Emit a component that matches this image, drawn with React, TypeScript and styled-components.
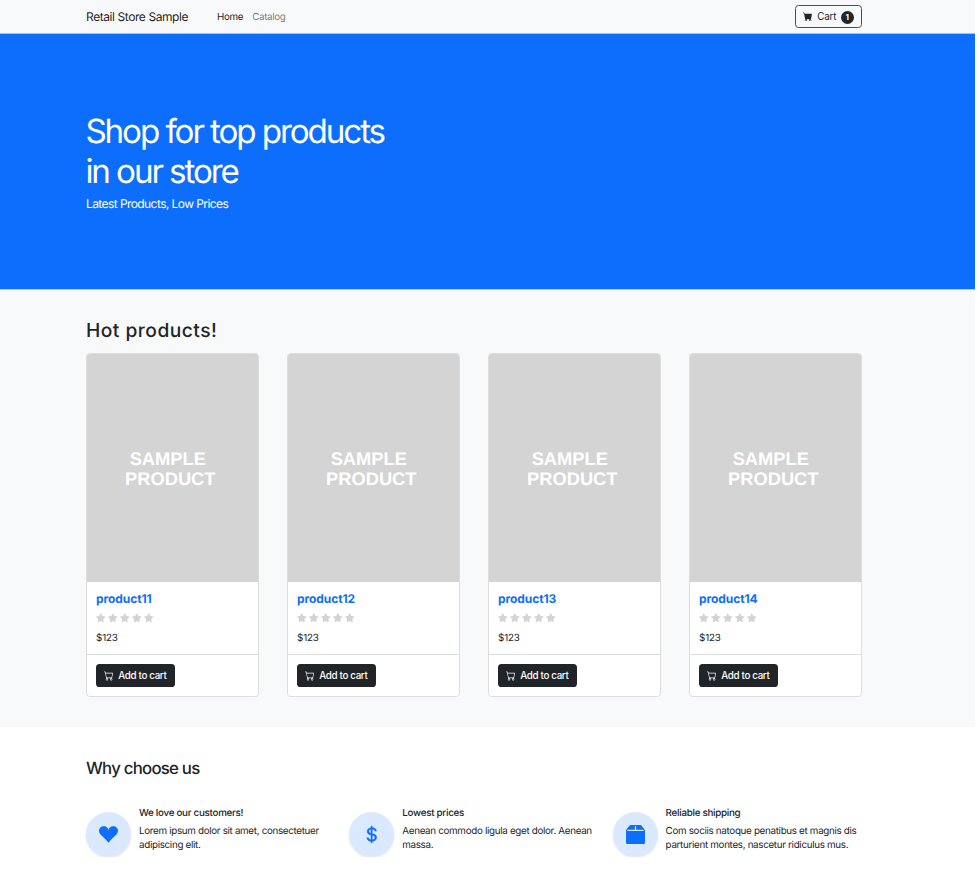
import React from "react";
import styled, { createGlobalStyle } from "styled-components";
import {
  BsBox2Fill,
  BsCart,
  BsCartFill,
  BsCurrencyDollar,
  BsStarFill,
  BsSuitHeartFill,
} from "react-icons/bs";

const Global = createGlobalStyle`
  *, *::before, *::after { box-sizing: border-box; }
  body {
    margin: 0;
    background: #fff;
    color: #212529;
    font-family: Inter, "Liberation Sans", sans-serif;
    font-size: 9.8px;
    line-height: 14.4px;
    text-rendering: geometricPrecision;
    overflow: hidden;
  }
  h1, h2, h3, h4, p { margin: 0; font-weight: 400; }
  svg { display: block; flex: none; }
`;

const Page = styled.div`
  width: 975px;
`;

const Container = styled.div`
  width: 775.6px;
  margin-left: 86px;
`;

const Header = styled.header`
  height: 34px;
  border-bottom: 1px solid #a0c3f2;
  background: #f8f9fa;
`;

const NavBar = styled(Container)`
  height: 33px;
  display: flex;
  align-items: center;
`;

const Brand = styled.a`
  width: 131px;
  padding-top: 1px;
  font-size: 12px;
  letter-spacing: -0.42px;
  color: rgba(0, 0, 0, 0.9);
`;

const NavLink = styled.a<{ $active?: boolean }>`
  margin-right: 9.2px;
  padding-top: 3px;
  letter-spacing: -0.36px;
  color: ${(p) => (p.$active ? "rgba(0,0,0,0.9)" : "rgba(0,0,0,0.55)")};
`;

const CartButton = styled.button`
  margin-left: auto;
  width: 66.4px;
  height: 23px;
  padding: 0 6.5px;
  display: flex;
  align-items: center;
  border: 1px solid #4a4d51;
  border-radius: 3.6px;
  background: transparent;
  color: #212529;
  font: inherit;
  letter-spacing: -0.15px;
`;

const CartLabel = styled.span`
  margin: 0 auto 0 5px;
  padding-top: 1px;
`;

const Badge = styled.span`
  width: 13.5px;
  height: 13px;
  margin-top: 1px;
  border-radius: 7px;
  background: #212529;
  color: #fff;
  font-size: 8px;
  font-weight: 700;
  line-height: 13px;
  letter-spacing: 0;
  text-align: center;
`;

const Hero = styled.section`
  height: 256px;
  padding-top: 77.6px;
  border-bottom: 1px solid #a9d0ff;
  background: #0d6efd;
  color: #fff;
`;

const HeroTitle = styled.h1`
  margin-left: -0.6px;
  font-size: 33.2px;
  font-weight: 370;
  line-height: 40.2px;
  letter-spacing: -2.1px;
`;

const HeroText = styled.p`
  margin-top: 3px;
  font-size: 12px;
  line-height: 18px;
  letter-spacing: -0.58px;
`;

const Products = styled.section`
  height: 437px;
  padding-top: 28px;
  background: #f8f9fa;
`;

const ProductsTitle = styled.h2`
  height: 35px;
  font-size: 19.2px;
  font-weight: 500;
  line-height: 24px;
  letter-spacing: 0.48px;
`;

const ProductGrid = styled.div`
  display: grid;
  grid-template-columns: repeat(4, 172.6px);
  justify-content: space-between;
`;

const Card = styled.article`
  height: 344px;
  display: flex;
  flex-direction: column;
  border: 1px solid #dcdddd;
  border-radius: 3.6px;
  background: #fff;
  overflow: hidden;
`;

const Picture = styled.div`
  height: 228px;
  padding: 95px 4px 0 0;
  background: #d4d4d4;
  color: #fff;
  font: 700 18.3px/20px "Liberation Sans", sans-serif;
  text-align: center;
`;

const CardBody = styled.div`
  height: 72px;
  padding: 8px 9px 0;
`;

const ProductName = styled.h3`
  color: #0d6efd;
  font-size: 12px;
  font-weight: 700;
  line-height: 17px;
  letter-spacing: -0.08px;
`;

const Stars = styled.div`
  height: 20px;
  margin-top: 0.8px;
  display: flex;
  align-items: center;
  gap: 2.55px;
  color: #d3d3d3;
`;

const Price = styled.p`
  margin-top: 4px;
  letter-spacing: -0.15px;
`;

const CardFooter = styled.div`
  flex: 1;
  padding: 9px 9px 0;
  border-top: 1px solid #dcdddd;
`;

const AddButton = styled.button`
  width: 79px;
  height: 23px;
  padding: 1px 0 0 8px;
  display: flex;
  align-items: center;
  gap: 4.7px;
  border: 0;
  border-radius: 3.6px;
  background: #212529;
  color: #fff;
  font: inherit;
  font-weight: 450;
  letter-spacing: -0.34px;
  white-space: nowrap;
`;

const Why = styled.section`
  padding-top: 32px;
`;

const WhyTitle = styled.h2`
  font-size: 16.8px;
  font-weight: 500;
  line-height: 21px;
  letter-spacing: -0.76px;
`;

const Benefits = styled.div`
  margin-top: 26px;
  display: grid;
  grid-template-columns: repeat(3, 263.3px);
`;

const Benefit = styled.article`
  display: flex;
  gap: 8px;
`;

const BenefitIcon = styled.div`
  flex: none;
  width: 45px;
  height: 45px;
  margin-top: 6px;
  display: flex;
  align-items: center;
  justify-content: center;
  border-radius: 50%;
  background: #dbe9ff;
  color: #0d6efd;
  box-shadow: 0 1.2px 2.4px rgba(0, 0, 0, 0.1);
`;

const BenefitCopy = styled.div`
  padding-top: 1px;
  white-space: nowrap;
  letter-spacing: -0.31px;
`;

const BenefitTitle = styled.h4`
  margin-bottom: 3.6px;
  font-weight: 500;
  letter-spacing: -0.28px;
`;

const products = ["product11", "product12", "product13", "product14"];

const benefits = [
  {
    title: "We love our customers!",
    lines: ["Lorem ipsum dolor sit amet, consectetuer", "adipiscing elit."],
    icon: <BsSuitHeartFill size={19} />,
  },
  {
    title: "Lowest prices",
    lines: ["Aenean commodo ligula eget dolor. Aenean", "massa."],
    icon: <BsCurrencyDollar size={19} stroke="currentColor" strokeWidth={0.4} />,
  },
  {
    title: "Reliable shipping",
    lines: ["Com sociis natoque penatibus et magnis dis", "parturient montes, nascetur ridiculus mus."],
    icon: <BsBox2Fill size={19} />,
  },
];

export default function App() {
  return (
    <Page>
      <Global />
      <Header>
        <NavBar>
          <Brand>Retail Store Sample</Brand>
          <NavLink $active>Home</NavLink>
          <NavLink>Catalog</NavLink>
          <CartButton>
            <BsCartFill size={9.5} />
            <CartLabel>Cart</CartLabel>
            <Badge>1</Badge>
          </CartButton>
        </NavBar>
      </Header>
      <Hero>
        <Container>
          <HeroTitle>
            Shop for top products
            <br />
            in our store
          </HeroTitle>
          <HeroText>Latest Products, Low Prices</HeroText>
        </Container>
      </Hero>
      <Products>
        <Container>
          <ProductsTitle>Hot products!</ProductsTitle>
          <ProductGrid>
            {products.map((name) => (
              <Card key={name}>
                <Picture>
                  SAMPLE&nbsp;
                  <br />
                  PRODUCT
                </Picture>
                <CardBody>
                  <ProductName>{name}</ProductName>
                  <Stars>
                    {[1, 2, 3, 4, 5].map((n) => (
                      <BsStarFill key={n} size={9.57} />
                    ))}
                  </Stars>
                  <Price>$123</Price>
                </CardBody>
                <CardFooter>
                  <AddButton>
                    <BsCart size={9.57} />
                    Add to cart
                  </AddButton>
                </CardFooter>
              </Card>
            ))}
          </ProductGrid>
        </Container>
      </Products>
      <Why>
        <Container>
          <WhyTitle>Why choose us</WhyTitle>
          <Benefits>
            {benefits.map((b) => (
              <Benefit key={b.title}>
                <BenefitIcon>{b.icon}</BenefitIcon>
                <BenefitCopy>
                  <BenefitTitle>{b.title}</BenefitTitle>
                  {b.lines.map((line) => (
                    <p key={line}>{line}</p>
                  ))}
                </BenefitCopy>
              </Benefit>
            ))}
          </Benefits>
        </Container>
      </Why>
    </Page>
  );
}
